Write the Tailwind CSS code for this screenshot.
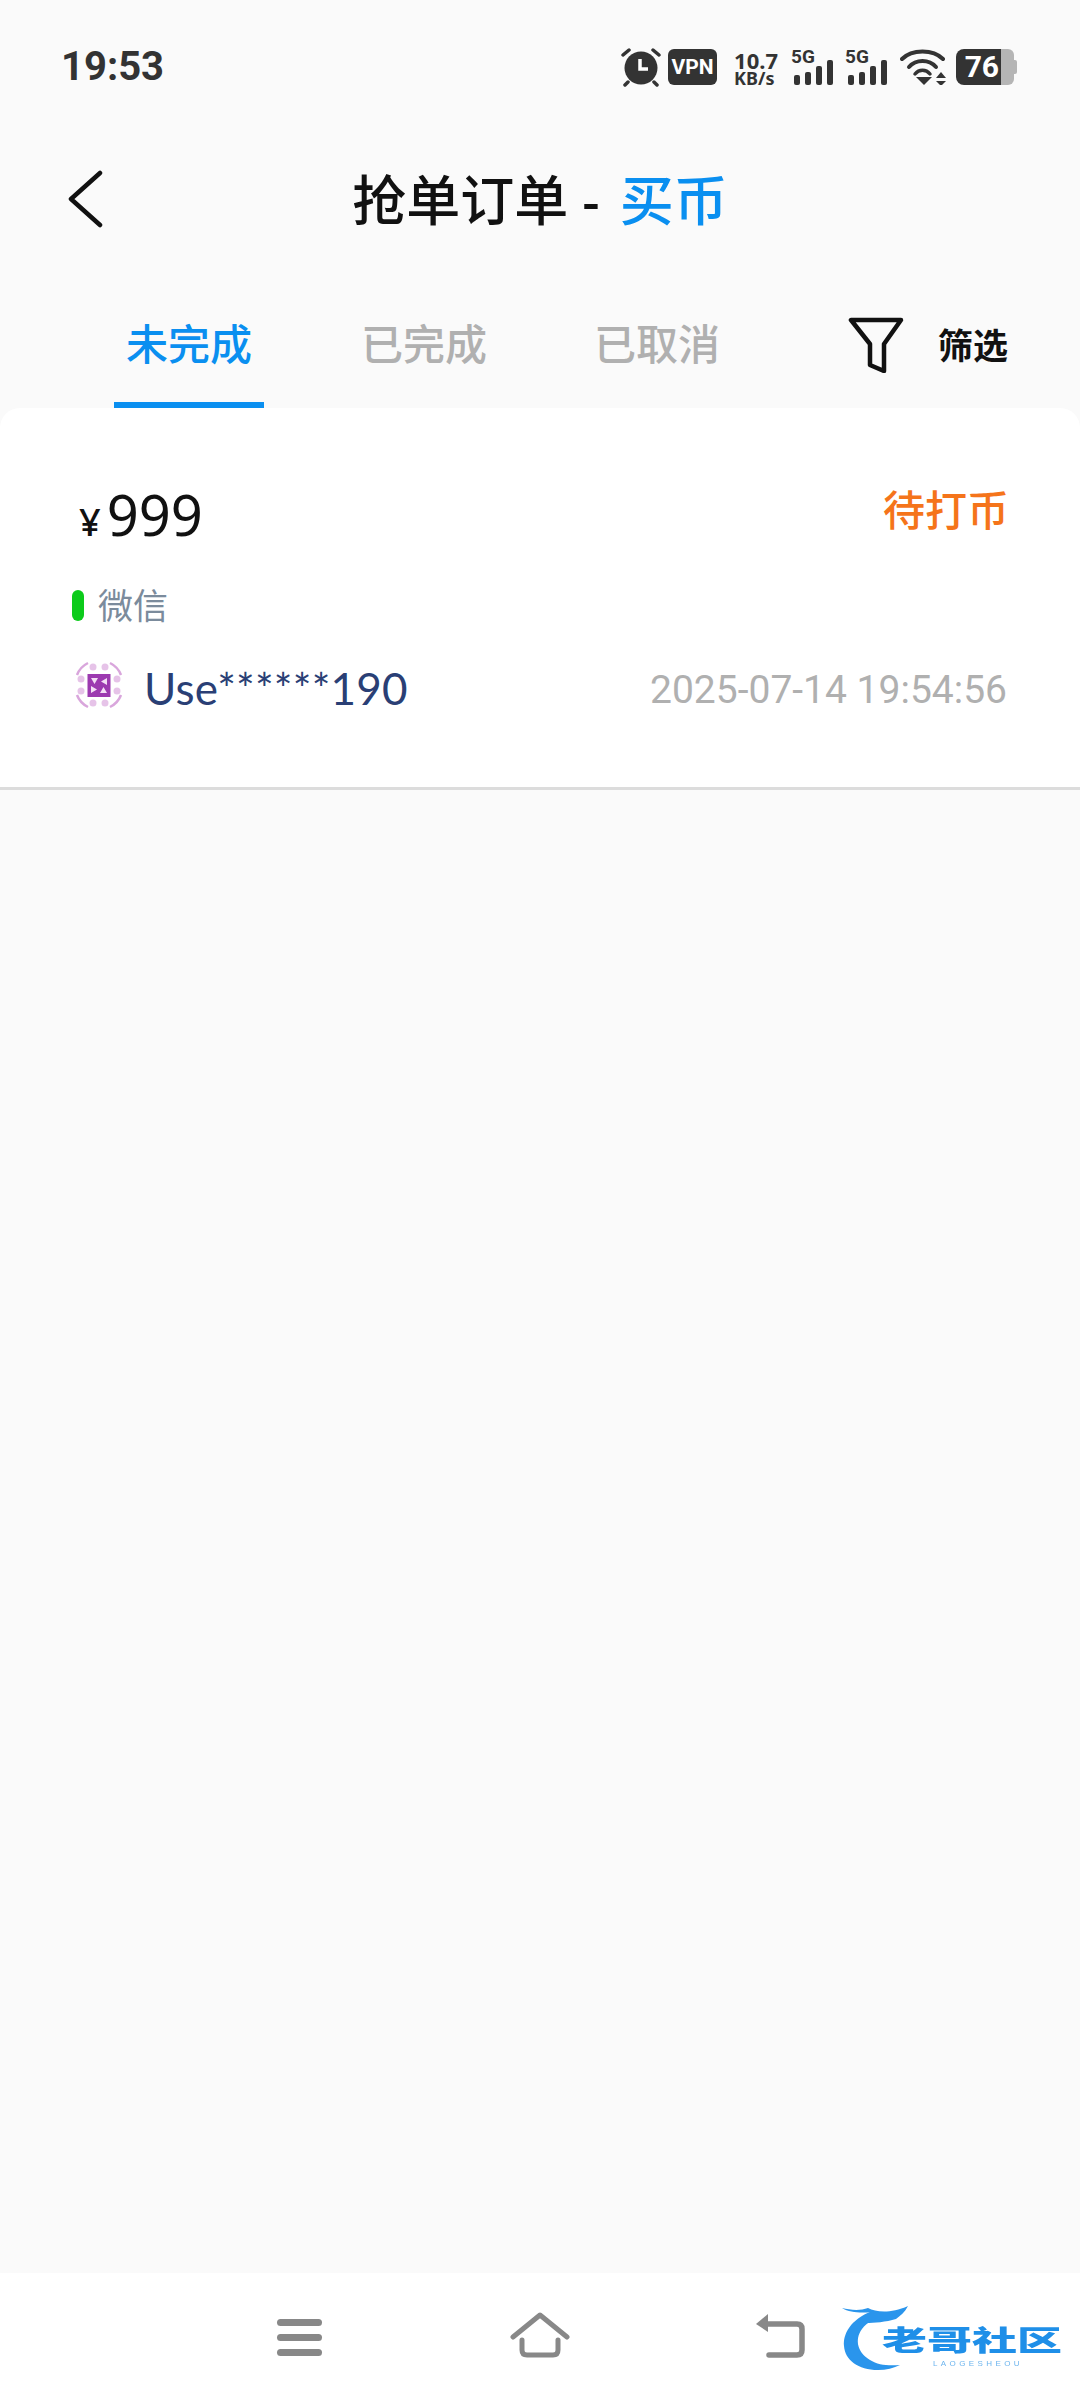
<!DOCTYPE html>
<html lang="zh-CN">
  <head>
    <meta charset="UTF-8" />
    <title>抢单订单</title>
    <script src="https://cdn.jsdelivr.net/npm/@tailwindcss/browser@4"></script>
  </head>
  <body class="relative w-[1080px] h-[2400px] flex flex-col overflow-hidden bg-[#fafafa] font-['Noto_Sans','Noto_Sans_CJK_SC',sans-serif]">
    <!-- Status bar -->
    <div class="h-[134px] shrink-0 flex items-center pl-[61px] text-[#333]">
      <span class="font-['Roboto',sans-serif] font-bold text-[40px] leading-none">19:53</span>
      <svg class="ml-[456px] w-[42px] h-[40px]" viewBox="0 0 42 40" fill="none">
        <circle cx="21" cy="21" r="16.5" fill="#333" />
        <path d="M20 12v10h8" stroke="#fff" stroke-width="3.5" />
        <path d="M3 8 9 3M39 8 33 3M8 35 5 38M34 35l3 3" stroke="#333" stroke-width="3.5" stroke-linecap="round" />
      </svg>
      <div class="ml-[6px] w-[49px] h-[36px] rounded-[6px] bg-[#333] text-white flex items-center justify-center font-['Roboto',sans-serif] font-bold text-[21px] leading-none">VPN</div>
      <div class="ml-[17px] mt-[1px] w-[46px] flex flex-col font-['Noto_Sans',sans-serif] font-bold">
        <span class="text-[22px] h-[20px] leading-[20px]">10.7</span>
        <span class="text-[18px] h-[16px] leading-[16px]">KB/s</span>
      </div>
      <div class="relative ml-[14px] w-[43px] h-[36px]">
        <span class="absolute left-[-3px] top-[-2px] font-['Roboto',sans-serif] font-bold text-[19px] leading-[19px]">5G</span>
        <div class="absolute inset-0 flex items-end gap-[4.5px]">
          <div class="w-[6px] h-[10px] rounded-[2px] bg-[#333]"></div>
          <div class="w-[6.5px] h-[13px] rounded-[2px] bg-[#333]"></div>
          <div class="w-[6.5px] h-[19px] rounded-[2px] bg-[#333]"></div>
          <div class="w-[6.5px] h-[25px] rounded-[2px] bg-[#333]"></div>
        </div>
      </div>
      <div class="relative ml-[11px] w-[43px] h-[36px]">
        <span class="absolute left-[-3px] top-[-2px] font-['Roboto',sans-serif] font-bold text-[19px] leading-[19px]">5G</span>
        <div class="absolute inset-0 flex items-end gap-[4.5px]">
          <div class="w-[6px] h-[10px] rounded-[2px] bg-[#333]"></div>
          <div class="w-[6.5px] h-[13px] rounded-[2px] bg-[#333]"></div>
          <div class="w-[6.5px] h-[19px] rounded-[2px] bg-[#333]"></div>
          <div class="w-[6.5px] h-[25px] rounded-[2px] bg-[#333]"></div>
        </div>
      </div>
      <svg class="ml-[9px] w-[46px] h-[36px]" viewBox="0 0 46 36" fill="none">
        <path d="M2 10C12 0 33 0 43 10" stroke="#333" stroke-width="4" stroke-linecap="round" />
        <path d="M9 18C16 10 29 10 36 18" stroke="#333" stroke-width="4" stroke-linecap="round" />
        <path d="M15 25C19 20 26 20 30 25" stroke="#333" stroke-width="3.5" stroke-linecap="round" />
        <path d="M16 28h16l-8 8zM36 29h10l-5-6zM36 32h10l-5 5z" fill="#333" />
      </svg>
      <div class="ml-[10px] relative w-[62px] h-[36px] flex">
        <div class="w-[45px] h-full rounded-l-[8px] bg-[#333] flex items-center justify-end pr-[2px] font-['Roboto',sans-serif] font-bold text-white text-[30px] leading-none">76</div>
        <div class="w-[13px] h-full rounded-r-[6px] bg-[#b5b5b5]"></div>
        <div class="w-[3px] h-[14px] mt-[11px] rounded-r-[2px] bg-[#b5b5b5]"></div>
      </div>
    </div>

    <!-- Title bar -->
    <div class="relative h-[132px] shrink-0 flex items-center justify-center">
      <svg class="absolute left-[66px] top-[36px] w-[38px] h-[58px]" viewBox="0 0 38 58" fill="none">
        <path d="M34 3 5 29l29 26" stroke="#111" stroke-width="4.5" stroke-linecap="round" stroke-linejoin="round" />
      </svg>
      <h1 class="text-[54px] leading-none font-medium text-[#111]">抢单订单 - <span class="ml-[6px] text-[#0a8ff0]">买币</span></h1>
    </div>

    <!-- Tabs -->
    <div class="h-[142px] shrink-0 flex items-start pl-[114px]">
      <div class="w-[150px] pt-[50px] pb-[30px] text-center text-[42px] leading-[56px] font-medium text-[#0a8ff0] border-b-[6px] border-[#0a8ff0]">未完成</div>
      <div class="ml-[85px] w-[150px] pt-[50px] pb-[30px] text-center text-[42px] leading-[56px] font-medium text-[#b0b0b0]">已完成</div>
      <div class="ml-[83px] w-[150px] pt-[50px] pb-[30px] text-center text-[42px] leading-[56px] font-medium text-[#b0b0b0]">已取消</div>
      <div class="ml-[116px] pt-[51px] flex items-center">
        <svg class="w-[56px] h-[56px]" viewBox="0 0 56 56" fill="none">
          <path d="M3 3h50L36 27v27l-14-6V27z" stroke="#111" stroke-width="4.5" stroke-linejoin="round" />
        </svg>
        <span class="ml-[34px] text-[35px] leading-none font-bold text-[#111]">筛选</span>
      </div>
    </div>

    <!-- Order card -->
    <div class="h-[382px] shrink-0 bg-white rounded-t-[20px] border-b-[3px] border-[#dcdcdc] pl-[72px] pr-[73px] pt-[78px] flex flex-col">
      <div class="flex justify-between items-start h-[62px]">
        <div class="flex items-baseline pl-[7px] text-[#111] leading-none">
          <span class="text-[38px] font-medium">¥</span>
          <span class="ml-[6px] text-[56px]">999</span>
        </div>
        <span class="pt-[3px] -mr-[2px] text-[42px] leading-none font-medium text-[#f5741a]">待打币</span>
      </div>
      <div class="mt-[37px] flex items-center h-[40px]">
        <div class="w-[12px] h-[31px] rounded-full bg-[#0ccb1b]"></div>
        <span class="ml-[14px] text-[35px] leading-none text-[#7b8b9c]">微信</span>
      </div>
      <div class="mt-[39px] flex items-center h-[48px]">
        <svg class="ml-[3px] mb-[6px] w-[48px] h-[48px]" viewBox="0 0 48 48" fill="none">
          <path d="M2 14Q5 6 13 2M46 14Q43 6 35 2M2 34Q5 42 13 46M46 34Q43 42 35 46" stroke="#d9a6dc" stroke-width="2.5" />
          <g fill="#e6c3e8">
            <circle cx="18" cy="6" r="3.5" /><circle cx="30" cy="6" r="3.5" />
            <circle cx="18" cy="42" r="3.5" /><circle cx="30" cy="42" r="3.5" />
            <circle cx="6" cy="18" r="3.5" /><circle cx="6" cy="30" r="3.5" />
            <circle cx="42" cy="18" r="3.5" /><circle cx="42" cy="30" r="3.5" />
          </g>
          <rect x="12.500" y="13" width="23" height="23" fill="#9c3ab0" />
          <path d="M16 17h7l-3.500 6zM32 17v7l-6-3.500zM16 32v-7l6 3.500zM32 32h-7l3.500-6z" fill="#f3dff5" />
        </svg>
        <span class="ml-[21px] font-['Lato',sans-serif] text-[44px] tracking-[0.2px] leading-none text-[#2a3f75]">Use******190</span>
        <span class="ml-auto mt-[4px] font-['Roboto',sans-serif] text-[39px] leading-none text-[#b0b0b0]">2025-07-14 19:54:56</span>
      </div>
    </div>

    <div class="flex-1"></div>

    <!-- Navigation bar -->
    <div class="h-[127px] shrink-0 bg-white flex items-start pl-[277px] pt-[39px]">
      <div class="w-[45px] flex flex-col gap-[8.500px] pt-[7px]">
        <div class="h-[6.500px] rounded-full bg-[#888]"></div>
        <div class="h-[6.500px] rounded-full bg-[#888]"></div>
        <div class="h-[6.500px] rounded-full bg-[#888]"></div>
      </div>
      <svg class="ml-[188px] w-[60px] h-[46px]" viewBox="0 0 60 46" fill="none">
        <path d="M3 25 30 3l27 22" stroke="#888" stroke-width="5" stroke-linecap="round" stroke-linejoin="round" />
        <path d="M12 28v10q0 5 5 5h26q5 0 5-5V28" stroke="#888" stroke-width="5" stroke-linecap="round" />
      </svg>
      <svg class="ml-[184px] w-[52px] h-[46px]" viewBox="0 0 52 46" fill="none">
        <path d="M12 12h31q5 0 5 5v21q0 5-5 5H15" stroke="#888" stroke-width="5.500" stroke-linecap="round" />
        <path d="M14 2 2 12l12 8z" fill="#888" />
      </svg>
    </div>

    <!-- Watermark over the navigation bar -->
    <div class="absolute left-[840px] top-[2304px] w-[226px] h-[70px] blur-[0.6px]">
      <svg class="absolute left-0 top-0 w-[90px] h-[70px]" viewBox="0 0 90 70" fill="none">
        <path d="M32 7C10 16 3 30 4 42c1 14 14 24 34 24 8 0 16-2 22-5-12 1-22 0-30-5C18 49 14 36 22 25c5-7 14-11 24-13z" fill="#2a95ec" />
        <path d="M2 4c8 2 18 3 26 0 8 4 22 6 40-2-3 6-8 10-12 13-10 3-22 4-30 4 2-4 4-8 6-11C22 9 10 9 2 4z" fill="#2a95ec" />
      </svg>
      <div class="absolute left-[42px] top-[14px] text-[45px] leading-[45px] whitespace-nowrap font-black text-[#1f8fe8] scale-y-[0.62]">老哥社区</div>
      <div class="absolute left-[93px] top-[56px] font-['Liberation_Sans',sans-serif] text-[8px] leading-[8px] tracking-[3.4px] whitespace-nowrap text-[#6db5ee]">LAOGESHEOU</div>
    </div>
  </body>
</html>
